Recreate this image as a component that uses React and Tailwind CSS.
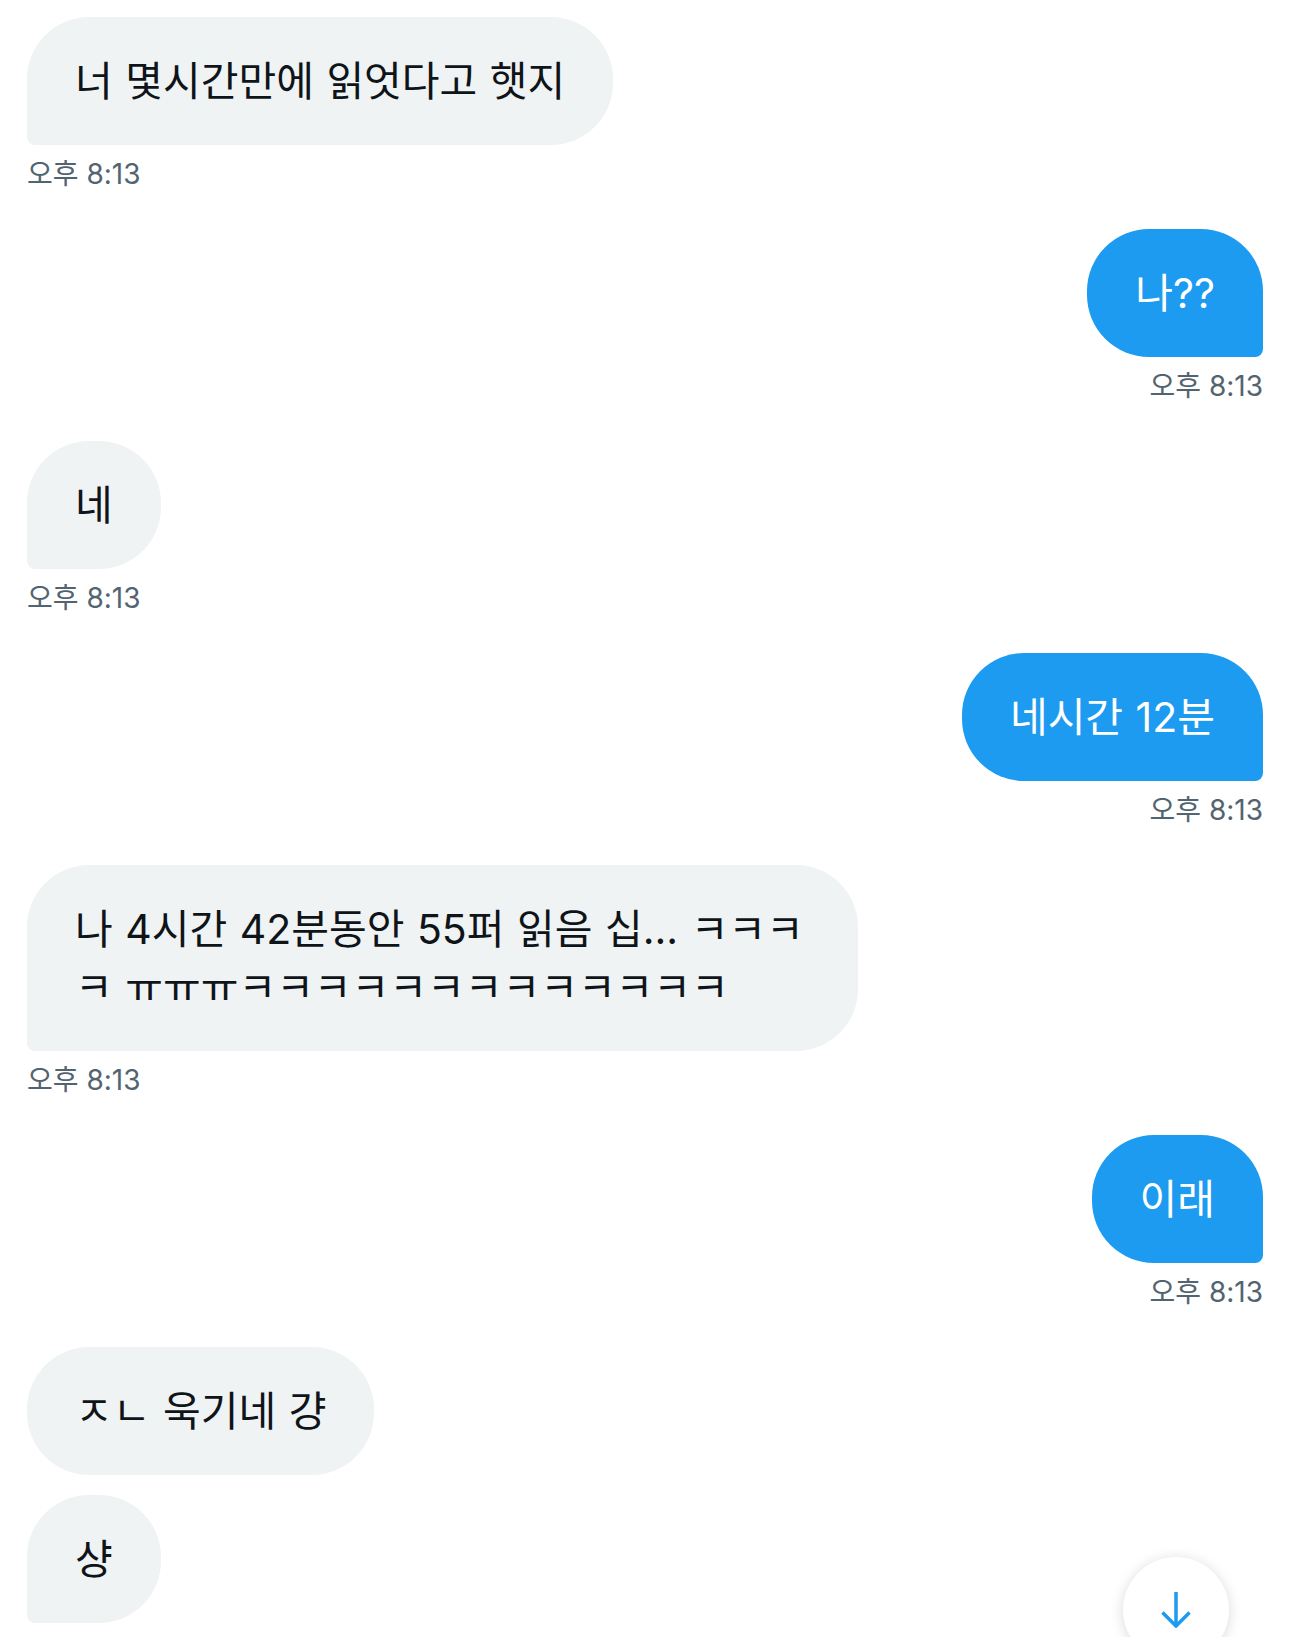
const messages = [
  { side: "in", bubbles: [{ text: "너 몇시간만에 읽엇다고 햇지" }], time: "오후 8:13" },
  { side: "out", bubbles: [{ text: "나??" }], time: "오후 8:13" },
  { side: "in", bubbles: [{ text: "네" }], time: "오후 8:13" },
  { side: "out", bubbles: [{ text: "네시간 12분" }], time: "오후 8:13" },
  {
    side: "in",
    bubbles: [{ text: "나 4시간 42분동안 55퍼 읽음 십... ㅋㅋㅋㅋ ㅠㅠㅠㅋㅋㅋㅋㅋㅋㅋㅋㅋㅋㅋㅋㅋ" }],
    time: "오후 8:13",
  },
  { side: "out", bubbles: [{ text: "이래" }], time: "오후 8:13" },
  { side: "in", bubbles: [{ text: "ㅈㄴ 욱기네 걍", round: true }, { text: "샹" }] },
];

export default function App() {
  return (
    <main className="relative h-[1637px] overflow-hidden bg-white px-[27px] pt-[17px] font-['Inter','Noto_Sans_CJK_KR',sans-serif]">
      <div className="flex flex-col gap-[37px]">
        {messages.map((group, index) => (
          <MessageGroup key={index} group={group} />
        ))}
      </div>

      <button className="absolute right-[61px] top-[1557px] flex h-[106px] w-[106px] items-center justify-center rounded-full bg-white shadow-[0_2px_14px_rgba(0,0,0,0.15)]">
        <svg width="34" height="36" viewBox="0 0 34 36" fill="none" stroke="#1d9bf0" strokeWidth="3.5">
          <path d="M17 0v33" />
          <path d="M3.5 20.5L17 34l13.5-13.5" />
        </svg>
      </button>
    </main>
  );
}

function MessageGroup({ group }) {
  const out = group.side === "out";
  return (
    <div className={`flex flex-col ${out ? "items-end" : "items-start"}`}>
      <div className={`flex flex-col gap-[20px] ${out ? "items-end" : "items-start"}`}>
        {group.bubbles.map((bubble, index) => (
          <Bubble key={index} out={out} round={bubble.round}>
            {bubble.text}
          </Bubble>
        ))}
      </div>
      {group.time && (
        <span className="mt-[11px] text-[28px] leading-[36px] text-[#536471]">{group.time}</span>
      )}
    </div>
  );
}

function Bubble({ out, round, children }) {
  const corner = round ? "" : out ? "rounded-br-[8px]" : "rounded-bl-[8px]";
  const colors = out ? "bg-[#1d9bf0] text-white" : "bg-[#eff3f4] text-[#0f1419]";
  return (
    <div
      className={`max-w-[831px] rounded-[62px] ${corner} ${colors} px-12 py-[35px] text-[41px] leading-[58px] [word-spacing:1px]`}
    >
      {children}
    </div>
  );
}
